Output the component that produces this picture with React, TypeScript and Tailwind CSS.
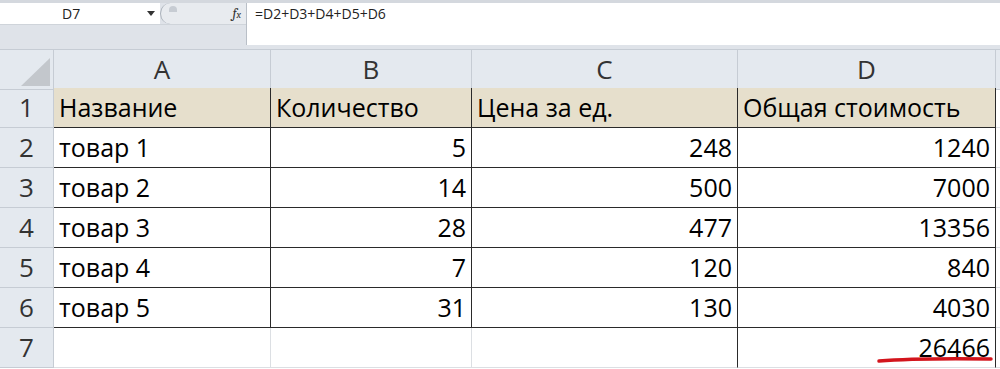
const rows = [
  { n: 1, a: "Название", b: "Количество", c: "Цена за ед.", d: "Общая стоимость", head: true },
  { n: 2, a: "товар 1", b: "5", c: "248", d: "1240" },
  { n: 3, a: "товар 2", b: "14", c: "500", d: "7000" },
  { n: 4, a: "товар 3", b: "28", c: "477", d: "13356" },
  { n: 5, a: "товар 4", b: "7", c: "120", d: "840" },
  { n: 6, a: "товар 5", b: "31", c: "130", d: "4030" },
];

const font = { fontFamily: '"Open Sans", "Noto Sans", sans-serif' };
const cols = "grid grid-cols-[54px_217px_201px_266px_258px_1fr]";
const rowHead =
  "flex items-center justify-center border-b border-r border-[#c6ccd4] bg-[#e4e9ef] text-[26px] text-[#333]";

function FormulaBar() {
  return (
    <div className="flex h-[49px] border-t-[3px] border-[#d4d8de] bg-[#dfe3e9]">
      <div className="flex w-[246px] flex-col">
        <div className="flex h-[21px] items-center">
          <div className="flex h-full w-[160px] items-center bg-white">
            <span className="flex-1 pl-[62px] text-[14px] text-[#222]">D7</span>
            <svg width="8" height="5" viewBox="0 0 8 5" className="mr-[5px]">
              <path d="M0 0h8L4 5z" fill="#333" />
            </svg>
          </div>
          <div className="relative flex h-full flex-1 items-center rounded-l-full border-l border-[#a9b0b9] bg-[#e8ebef]">
            <div className="absolute left-[8px] top-[3px] h-[6px] w-[8px] rounded-t-full bg-[#c7ccd3]" />
            <span className="ml-auto mr-[5px] font-serif text-[14px] italic text-[#333]">
              f<span className="text-[10px]">x</span>
            </span>
          </div>
        </div>
        <div className="flex-1 border-t border-[#cfd4da]" />
      </div>
      <div className="h-[42px] flex-1 border-l border-[#b9bfc7] bg-white pl-[8px] text-[14px] text-[#222]">
        =D2+D3+D4+D5+D6
      </div>
    </div>
  );
}

function ColHeader() {
  const h = "flex items-center justify-center border-b border-r border-[#c6ccd4] bg-[#e4e9ef] text-[26px] text-[#333]";
  return (
    <div className={`${cols} h-[39px] border-t border-[#c6ccd4]`}>
      <div className="relative border-b border-r border-[#c6ccd4] bg-[#e4e9ef]">
        <svg className="absolute left-[21px] top-[8px]" width="29" height="28" viewBox="0 0 29 28">
          <path d="M29 0V28H0z" fill="#c3c7cc" />
        </svg>
      </div>
      <div className={h}>A</div>
      <div className={h}>B</div>
      <div className={h}>C</div>
      <div className={h}>D</div>
      <div className="border-b border-[#c6ccd4] bg-[#e4e9ef]" />
    </div>
  );
}

export default function App() {
  return (
    <div className="relative h-[369px] w-[1000px] overflow-hidden bg-white" style={font}>
      <FormulaBar />
      <ColHeader />
      {rows.map((r) => {
        const bg = r.head ? "bg-[#e6dfcc]" : "bg-white";
        const cell = `flex items-center border-b border-r border-[#2a2a2a] px-[5px] text-[25px] text-black ${bg}`;
        return (
          <div key={r.n} className={`${cols} h-[40px]`}>
            <div className={rowHead}>{r.n}</div>
            <div className={cell}>{r.a}</div>
            <div className={`${cell} ${r.head ? "" : "justify-end"}`}>{r.b}</div>
            <div className={`${cell} ${r.head ? "" : "justify-end"}`}>{r.c}</div>
            <div className={`${cell} ${r.head ? "" : "justify-end"}`}>{r.d}</div>
            <div className="border-b border-[#dcdfe3]" />
          </div>
        );
      })}
      <div className={`${cols} h-[40px]`}>
        <div className={rowHead}>7</div>
        <div className="border-b border-r border-[#dcdfe3]" />
        <div className="border-b border-r border-[#dcdfe3]" />
        <div className="border-b border-r border-[#dcdfe3] border-r-[#2a2a2a]" />
        <div className="flex items-center justify-end border-b border-r border-[#2a2a2a] border-b-[#dcdfe3] px-[5px] text-[25px] text-black">
          26466
        </div>
        <div className="border-b border-[#dcdfe3]" />
      </div>
      <svg className="absolute left-[876px] top-[355px]" width="118" height="10" viewBox="0 0 118 10">
        <path d="M3 6 Q 40 3 115 4" stroke="#d3141c" strokeWidth="3.5" strokeLinecap="round" fill="none" />
      </svg>
    </div>
  );
}
